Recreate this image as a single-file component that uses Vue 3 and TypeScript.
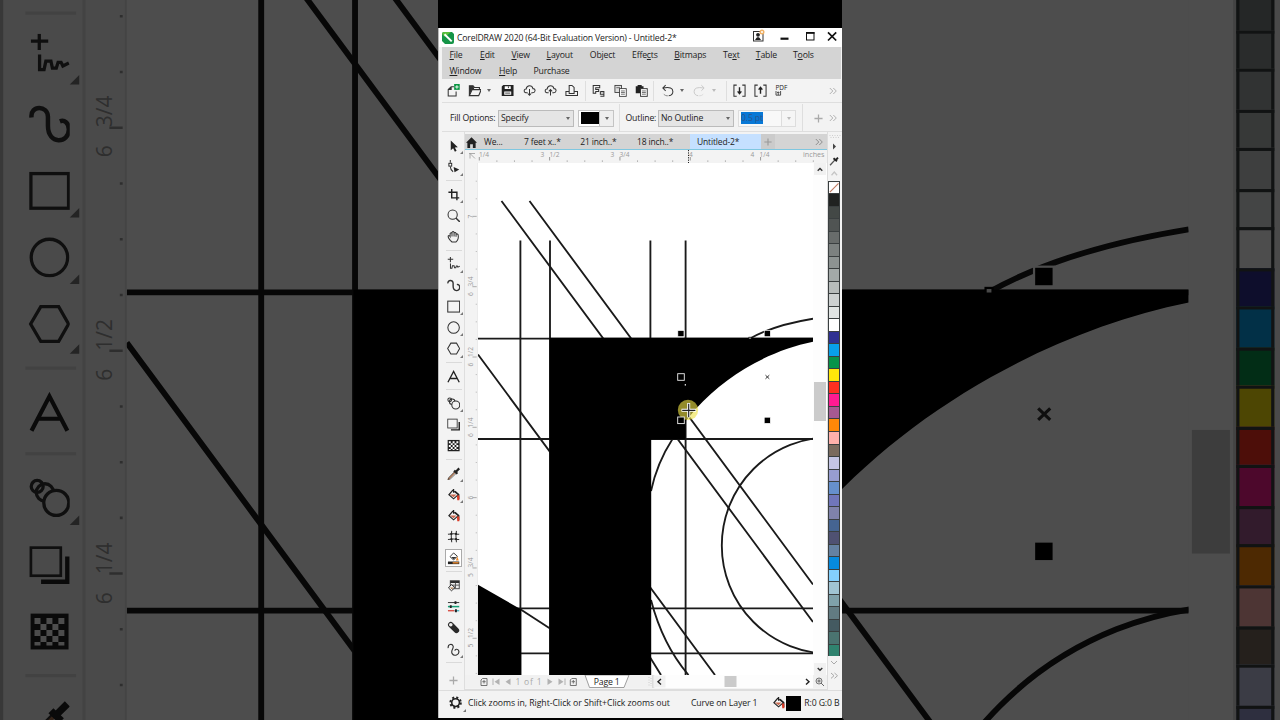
<script setup lang="ts">
interface Tool { icon: string; flyout?: boolean; active?: boolean; sep?: boolean }

const layers: string[] = ['backdrop', 'front']

const menuTop: [string, string, string, number][] = [
  ['', 'F', 'ile', 30.5], ['', 'E', 'dit', 31.5], ['', 'V', 'iew', 35], ['', 'L', 'ayout', 43.3], ['Object', '', '', 42.2],
  ['Effe', 'c', 'ts', 42.3], ['', 'B', 'itmaps', 48.7], ['Te', 'x', 't', 32.8], ['', 'T', 'able', 37.2], ['T', 'o', 'ols', 30],
]
const menuBottom: [string, string, string, number][] = [['', 'W', 'indow', 49.5], ['', 'H', 'elp', 34.5], ['Purchase', '', '', 50]]

const s = 'fill="none" stroke="#333" stroke-width="1.1"'
const icons: Record<string, string> = {
  pick: '<path d="M4 1.500v10.500l2.500-2.200 1.900 3.700 1.800-.9-1.900-3.500 3.200-.3z" fill="#222"/>',
  shape: `<path d="M3.500 0v3M3.500 7q.3 4 3 5.500" ${s}/><rect x="2" y="3.500" width="3" height="3" fill="#fff" stroke="#222"/><path d="M7 7.500l6 2.500-5 3z" fill="#222"/>`,
  crop: '<path d="M5 1v9.500h8M1.500 4.500h9v8.500" fill="none" stroke="#222" stroke-width="1.500"/>',
  zoom: `<circle cx="6" cy="6" r="4.900" ${s}/><path d="M9.400 9.500l4.200 4.200" stroke="#333" stroke-width="1.500"/>`,
  hand: `<path d="M3.500 11Q.8 8 1.300 6.300q1-1 2 .7V3.700q1.200-1.500 2 0V2.500q1.200-1.600 2.200 0v.7q1.200-1.200 2.100.3v1q1.400-1 2.200.5 1 5-2.200 7.700H5.200zM5.300 3.700V7M7.500 3v4M9.600 4v3.200" ${s}/>`,
  freehand: `<path d="M3.600 0v5.500M.8 2.500h5.800" ${s} stroke-width="1"/><path d="M3.700 7v5h1.500l.6-2.800h1.700l.5 2.300h1.300l.6-1.900h1l.6 1.200 2-1" ${s} stroke-width="1"/>`,
  curve: '<path d="M1 4.700C.5 .5 6.500 .5 6.500 4.500v3c0 6.500 7 6 7 1.200 0-2.200-1.500-3.300-3-2.700" fill="none" stroke="#333" stroke-width="1.500"/>',
  rect: `<rect x=".8" y="1.200" width="12.600" height="11.600" ${s} stroke-width=".9"/>`,
  ellipse: `<circle cx="7" cy="7" r="6.100" ${s} stroke-width=".9"/>`,
  polygon: `<path d="M4.100 1.200h6l3.300 5.800-3.300 5.800h-6L.7 7z" ${s} stroke-width=".9"/>`,
  text: '<path d="M1 13L7 1.500l6 11.500M3 9h8" fill="none" stroke="#222" stroke-width="1.400"/>',
  blend: `<g ${s} stroke-width=".9"><circle cx="2.900" cy="3" r="2"/><circle cx="5.500" cy="5" r="2.900"/><circle cx="9.300" cy="8.500" r="4.200" fill="#f3f3f3"/></g>`,
  shadow: `<path d="M4.200 12.600h8.800V4.200" fill="none" stroke="#222" stroke-width="1.500"/><rect x=".8" y="1.200" width="10" height="9.400" fill="#f6f6f6" stroke="#333" stroke-width=".9"/>`,
  checker: '<rect x=".7" y="1" width="12.700" height="12" fill="#222"/><g fill="#fff"><path d="M2 2.500h2v2H2zM6 2.500h2v2H6zM10 2.500h2v2h-2zM4 4.500h2v2H4zM8 4.500h2v2H8zM2 6.500h2v2H2zM6 6.500h2v2H6zM10 6.500h2v2h-2zM4 8.500h2v2H4zM8 8.500h2v2H8zM2 10.500h2v1.200H2zM6 10.500h2v1.200H6zM10 10.500h2v1.200h-2z"/></g>',
  dropper: '<path d="M1 13.500L9 5" stroke="#ad7450" stroke-width="1.500"/><path d="M1 13.500l1-2.500L8 5M1.500 13.500l2.300-1L10 6.500" fill="none" stroke="#333" stroke-width=".7"/><path d="M7.500 3.800l3.500 3.400M9.500 5l3.500-3.500" stroke="#222" stroke-width="2.400"/>',
  bucket: '<path d="M6 2.500l6 4.500-5 4.500-5-4.300z" fill="#f5f5f5" stroke="#222" stroke-width="1.200"/><path d="M3 7h7L7 9.800z" fill="#c96a50"/><path d="M7 1v4M8.500 3.500L12.500 7v5" fill="none" stroke="#222" stroke-width="1.300"/><path d="M10.500 8h2.600v5h-2.200z" fill="#dc3b25"/>',
  mesh: `<path d="M5 1q-1 5 0 12M10 1q-1 5 0 12M1 4.500q6-1 12 0M1 10q6-1 12 0" ${s} stroke-width=".8"/><g fill="#222"><circle cx="4.600" cy="4.200" r="1.200"/><circle cx="9.600" cy="4.200" r="1.200"/><circle cx="4.700" cy="9.800" r="1.200"/><circle cx="9.600" cy="9.800" r="1.200"/></g>`,
  objfill: '<path d="M7 1l4 3.500L7 8.500 3.200 5z" fill="#fff" stroke="#333"/><path d="M4.500 5.200h5.500L7 7.700z" fill="#333"/><path d="M10.800 4.500L12.500 9h-3z" fill="#e9892f"/><path d="M1 11.500h12" stroke="#222" stroke-width="2.800"/><path d="M6 11.500h6.400" stroke="#e9892f" stroke-width="1.500"/>',
  table: '<rect x="3.500" y="1.800" width="9.500" height="8.500" fill="#eee" stroke="#444"/><path d="M3.500 3.200H13" stroke="#222" stroke-width="2"/><path d="M9 4v6M5 6.500h8" stroke="#555"/><path d="M4.500 6l4 3-3.700 3.500-3.200-3z" fill="#fff" stroke="#222"/><path d="M3 9h4.500L5 11z" fill="#a47449"/>',
  sliders: '<path d="M1 2.700h12" stroke="#444" stroke-width="1.100"/><path d="M1 7h12" stroke="#16a176" stroke-width="1.600"/><path d="M1 11.400h7" stroke="#d43b31" stroke-width="1.300"/><path d="M8 11.400h5" stroke="#37a8bb" stroke-width="1.300"/><g fill="#222"><path d="M8 1.200h2v3H8zM3 5.500h2v3H3zM8.500 9.900h2v3h-2z"/></g>',
  pill: '<path d="M4 4l6 6" stroke="#2a2a2a" stroke-width="5.800" stroke-linecap="round"/><circle cx="4" cy="4" r="1.900" fill="#eee"/>',
  squiggle: '<path d="M1.300 5.500C.5 1 5.500 .5 6.500 3.300S3.500 8 5.500 11.300s8 1.200 7-2.800c-1-3-4.500-2-3.800-.3" fill="none" stroke="#333" stroke-width="1.200"/>',
  newdoc: `<path d="M7.500 3H4.500L1.300 6v7h8.500V8M1.300 6h3.200V3" ${s}/><path d="M7.700 0h6v6.300h-6z" fill="#079541"/><path d="M10.700 1.300v3.800M8.800 3.200h3.800" stroke="#fff" stroke-width="1"/>`,
  open: '<path d="M1.500 12.500V2h4l1.300 1.700h5.500V6M1.500 12.500L4.500 6h9.800L11.500 12.500z" fill="#f4f4f4" stroke="#333" stroke-width="1.200"/><path d="M1.500 12V2h3.800l1.200 2v2H4.300z" fill="#333"/>',
  save: '<path d="M2.500 1h11v12H.8V2.700z" fill="#222"/><path d="M4 2.500h6.500v3H4zM3.500 8h7.500v3.700H3.500z" fill="#fff"/><path d="M4.500 9.800h5.500M8 2.500v2" stroke="#333"/>',
  down: `<path d="M5 9.500H3Q.8 8.700 1.300 6.800 2 5.300 3.300 5.500 4 2 7 2t3.700 3q2.200-.2 2.300 2.300-.3 2.200-2.500 2.200H9M7 5.500v6.500M5.200 10.200L7 12.200l1.800-2" ${s}/>`,
  up: `<path d="M5 9.500H3Q.8 8.700 1.300 6.800 2 5.300 3.300 5.500 4 2 7 2t3.700 3q2.200-.2 2.300 2.300-.3 2.200-2.500 2.200H9M7 12.500V6M5.200 8L7 6l1.800 2" ${s}/>`,
  print: `<path d="M4.500 8V1.500h3l2.300 2.200V8M1 12.500h12.500V8h-3.700v2.200H4.500V8H1z" ${s}/>`,
  cut: `<path d="M1.300 10V1.500h7V4H4v2h3.200v2H4v2zM9 8.200h3.800v5H9M9 8.200v2.800h3.800" ${s} stroke-width=".9"/>`,
  copy: `<rect x="1" y="1.500" width="7" height="7.700" fill="#ddd" stroke="#333" stroke-width=".9"/><rect x="6" y="5" width="7.200" height="8.300" fill="#fff" stroke="#333" stroke-width=".9"/><path d="M2.500 4h4M7.500 7.500h4.200M7.500 9.200h4.200M7.500 11h4.200" stroke="#444" stroke-width=".8"/>`,
  paste: '<path d="M.8 2.500h2V1h4.400v1.500h2V10H.8z" fill="#222"/><rect x="6" y="5" width="7.200" height="8.300" fill="#fff" stroke="#333"/><path d="M7.500 7.500h4.200M7.500 9.200h4.200M7.500 11h4.200" stroke="#444" stroke-width=".8"/>',
  undo: `<path d="M5 1.300L2 4.300l3 3M2.500 4.300Q12.800 2.500 12.800 8q0 4-4.500 4.700" ${s}/><path d="M7 12.700q-2.500 0-4.300-2" fill="none" stroke="#333" stroke-dasharray="1.200 1"/>`,
  redo: '<g transform="translate(14 0) scale(-1 1)" fill="none" stroke="#c6c6c6"><path d="M5 1.300L2 4.300l3 3M2.500 4.300Q12.800 2.500 12.800 8q0 4-4.500 4.700"/><path d="M7 12.700q-2.500 0-4.300-2" stroke-dasharray="1.200 1"/></g>',
  import: `<path d="M4 1.200H1v12h3M10 1.200h3v12h-3" ${s}/><path d="M7 3.500v6.500M5 8l2 2.500L9 8" fill="none" stroke="#222" stroke-width="1.500"/>`,
  export: `<path d="M4 1.200H1v12h3M10 1.200h3v12h-3" ${s}/><path d="M7 10.500V4M5 6l2-2.500L9 6" fill="none" stroke="#222" stroke-width="1.500"/>`,
  gear: '<circle cx="7" cy="7" r="5.500" fill="none" stroke="#222" stroke-width="2.200" stroke-dasharray="2.160 2.160"/><circle cx="7" cy="7" r="4.100" fill="none" stroke="#222" stroke-width="1.700"/>',
}

const tools: Tool[] = [
  { icon: 'pick', flyout: true }, { icon: 'shape', flyout: true, sep: true },
  { icon: 'crop', flyout: true }, { icon: 'zoom' }, { icon: 'hand', sep: true },
  { icon: 'freehand', flyout: true }, { icon: 'curve' }, { icon: 'rect', flyout: true }, { icon: 'ellipse', flyout: true },
  { icon: 'polygon', flyout: true, sep: true }, { icon: 'text', sep: true },
  { icon: 'blend', flyout: true }, { icon: 'shadow' }, { icon: 'checker', sep: true },
  { icon: 'dropper', flyout: true }, { icon: 'bucket', flyout: true }, { icon: 'bucket' }, { icon: 'mesh' },
  { icon: 'objfill', active: true, sep: true }, { icon: 'table' }, { icon: 'sliders' }, { icon: 'pill' },
  { icon: 'squiggle', flyout: true, sep: true },
]

const barIcons: [string, number][] = [
  ['newdoc', 21.5], ['open', 19], ['caret', 14], ['save', 21.5], ['down', 21.2], ['up', 21.3], ['print', 20.5], ['sep', 6.5],
  ['cut', 21.8], ['copy', 20.8], ['paste', 18.4], ['sep', 8], ['undo', 19.3], ['caret', 12.5], ['redo', 19], ['caretOff', 14.7], ['sep', 6.5],
  ['import', 21], ['export', 21.5],
]

const tabs: [string, number][] = [['7 feet x..*', 56.3], ['21 inch..*', 56.7], ['18 inch..*', 56]]

const swatches: string[] = [
  '#202221', '#434846', '#505453', '#686c6b', '#7c8180', '#8d9392', '#a3a9a8', '#b7bcbb', '#cdd1d1', '#e1e5e4', '#ffffff',
  '#2f3192', '#08a0ea', '#07944a', '#ffe70a', '#ff3020', '#ff1b92', '#a65992', '#ff8808', '#ffb1ab', '#7a6b5e', '#c4c5e4',
  '#979dd0', '#6690cd', '#7076ba', '#7f82aa', '#456491', '#4f5172', '#6481a2', '#068ade', '#83d0fd', '#a0c4d3', '#7fa1aa',
  '#627b82', '#445a61', '#4a7370', '#30836f',
]

const hTicks = Array.from({ length: 20 }, (_, i) => ({ x: 479.3 + i * 17.58, major: i % 4 === 0 }))
const vTicks = Array.from({ length: 29 }, (_, i) => ({ y: 181.2 + i * 17.58, major: i % 4 === 2 }))
const hLabels: [number, string][] = [[479, '1/4'], [540.5, '3'], [549.5, '1/2'], [610.5, '3'], [619.5, '3/4'], [689, '4'], [750.5, '4'], [759.5, '1/4']]
const vLabels: [number, string][] = [[218.5, '7'], [296, '6'], [286.5, '3/4'], [366.5, '6'], [357, '1/2'], [437, '6'], [427.5, '1/4'], [499.5, '6'], [577, '5'], [567.5, '3/4'], [647.5, '5'], [638, '1/2']]
</script>

<template>
  <div class="stage">
    <div v-for="layer in layers" :key="layer" class="phone" :class="layer">
      <div class="window">
        <header class="title">
          <svg class="logo" viewBox="0 0 12 12"><path d="M0 2Q0 0 2 0h8l2 2v8q0 2-2 2H3L0 9z" fill="#159447" /><path d="M0 2Q0 0 2 0h7L3 5z" fill="#59bf3b" /><path d="M2.500 2.200L9.700 9.400" stroke="#fff" stroke-width="2" /></svg>
          <span class="title-text">CorelDRAW 2020 (64-Bit Evaluation Version) - Untitled-2*</span>
          <svg class="controls" viewBox="748 0 90 19">
            <rect x="753.500" y="3.500" width="9.500" height="9.500" fill="#fff" stroke="#333" />
            <circle cx="758" cy="6.800" r="1.900" fill="#222" /><path d="M755 12q3-6 6 0z" fill="#222" />
            <circle cx="762" cy="4" r="2.500" fill="#f0b268" /><circle cx="762" cy="4" r="1" fill="#fff" />
            <path d="M780.500 10.700h8" stroke="#111" stroke-width="2.200" />
            <rect x="806.500" y="4.500" width="7.500" height="7.500" fill="none" stroke="#111" /><path d="M806 5h8.500" stroke="#111" stroke-width="1.700" />
            <path d="M828 4.300l8.200 8.200M836.200 4.300l-8.200 8.200" stroke="#111" stroke-width="1.700" />
          </svg>
        </header>

        <nav class="menu">
          <div class="menu-row"><span v-for="(m, i) in menuTop" :key="i" :style="{ width: m[3] + 'px' }">{{ m[0] }}<u>{{ m[1] }}</u>{{ m[2] }}</span></div>
          <div class="menu-row"><span v-for="(m, i) in menuBottom" :key="i" :style="{ width: m[3] + 'px' }">{{ m[0] }}<u>{{ m[1] }}</u>{{ m[2] }}</span></div>
        </nav>

        <div class="toolbar">
          <span v-for="(b, i) in barIcons" :key="i" class="slot" :style="{ width: b[1] + 'px' }">
            <i v-if="b[0] === 'sep'" class="vsep"></i>
            <i v-else-if="b[0].startsWith('caret')" class="caret" :class="{ off: b[0] === 'caretOff' }"></i>
            <svg v-else class="ico" viewBox="0 0 14 14" v-html="icons[b[0]]"></svg>
          </span>
          <span class="pdf">PDF<svg viewBox="0 0 8 6"><path d="M1 0v5h5.500V0M3.700 5V1M2.200 2.500L3.700 1l1.500 1.500" fill="none" stroke="#333" /></svg></span>
          <svg class="more" viewBox="0 0 8 8"><path d="M.8 1l3 3-3 3M4.300 1l3 3-3 3" fill="none" stroke="#aaa" stroke-width=".9" /></svg>
        </div>

        <div class="props">
          <span class="lbl fill-lbl">Fill Options:</span>
          <span class="select">Specify<i class="caret"></i></span>
          <span class="color"><b></b><em><i class="caret"></i></em></span>
          <i class="vsep tall"></i>
          <span class="lbl out-lbl">Outline:</span>
          <span class="select">No Outline<i class="caret"></i></span>
          <span class="width"><b>0.5 pt</b><em><i class="caret off"></i></em></span>
          <i class="vsep tall second"></i>
          <svg class="plus" viewBox="0 0 10 10"><path d="M5 .5v9M.5 5h9" stroke="#aaa" stroke-width="1.400" /></svg>
          <svg class="more" viewBox="0 0 8 8"><path d="M.8 1l3 3-3 3M4.300 1l3 3-3 3" fill="none" stroke="#aaa" stroke-width=".9" /></svg>
        </div>

        <main class="main">
          <aside class="toolbox">
            <div v-for="(t, i) in tools" :key="i" class="tool" :class="{ sep: t.sep }">
              <div class="tool-box" :class="{ active: t.active }">
                <svg class="ico" viewBox="0 0 14 14" v-html="icons[t.icon]"></svg>
                <i v-if="t.flyout" class="flyout"></i>
              </div>
            </div>
            <svg class="plus add" viewBox="0 0 10 10"><path d="M5 .5v9M.5 5h9" stroke="#aaa" stroke-width="1.400" /></svg>
          </aside>

          <section class="doc">
            <div class="tabs">
              <span class="tab home"><svg viewBox="0 0 12 12"><path d="M6 .3L12 6.300H10.500V12H7.500V8H4.500v4h-3V6.300H0z" fill="#222" /></svg>We...</span>
              <span v-for="t in tabs" :key="t[0]" class="tab" :style="{ width: t[1] + 'px' }">{{ t[0] }}</span>
              <span class="tab current">Untitled-2*</span>
              <span class="tab new"><svg viewBox="0 0 10 10"><path d="M5 .5v9M.5 5h9" stroke="#999" stroke-width="1.400" /></svg></span>
              <svg class="more" viewBox="0 0 8 8"><path d="M.8 1l3 3-3 3M4.300 1l3 3-3 3" fill="none" stroke="#888" stroke-width=".9" /></svg>
            </div>
            <svg class="hruler" viewBox="465 150 362 13">
              <rect x="465" y="150" width="362" height="13" fill="#f3f3f3" />
              <path d="M469 153.500h6M470 153.500l5 5M470 153.500v5" stroke="#999" stroke-width=".8" fill="none" />
              <path v-for="t in hTicks" :key="t.x" :d="`M${t.x} ${t.major ? 157 : 160.500}V${t.major ? 160.500 : 161.700}`" stroke="#999" stroke-width="1" />
              <text v-for="l in hLabels" :key="l[0]" :x="l[0]" y="156.500" class="rule-text">{{ l[1] }}</text>
              <path d="M688.500 150v13" stroke="#222" stroke-dasharray="1.200 1.200" />
              <text x="803" y="156.500" class="rule-text inches" textLength="21.500">inches</text>
            </svg>
            <div class="work">
              <svg class="vruler" viewBox="465 163 13 512">
                <rect x="465" y="163" width="13" height="512" fill="#f3f3f3" /><path d="M477.700 163v512" stroke="#e2e2e2" stroke-width=".6" />
                <path v-for="t in vTicks" :key="t.y" :d="`M${t.major ? 472.500 : 475.800} ${t.y}H476.700`" stroke="#999" stroke-width=".8" />
                <text v-for="l in vLabels" :key="l[0]" :transform="`translate(473.300 ${l[0]}) rotate(-90)`" class="rule-text">{{ l[1] }}</text>
              </svg>
              <svg class="canvas" viewBox="478 163 335 512">
                <rect x="478" y="163" width="335" height="512" fill="#fff" />
                <g fill="none" stroke="#1a1a1a" stroke-width="1.850">
                  <path d="M501.500 201L813 622M529.500 201L813 584.500M478 354.500L715 675M648 654L661 675" />
                  <path d="M520.400 240.500V675M550 240.500V675M650.400 240.500V440M685.600 240.500V675" />
                  <path d="M478 338.600H813M478 439H813M478 608.300H813M478 653.300H813" />
                  <path d="M750 338.500Q774 325 813 318.700" />
                  <path d="M672.500 439Q657 463 651 491M651 600Q662.500 644.500 688.500 675" />
                  <circle cx="830" cy="545.500" r="108.200" />
                  <path d="M520 609L550 628.500" />
                </g>
                <path d="M549.500 337.800H813V341.800C770 350.500 726 375 696 408.700L685.600 421V439.500H651.200V675H549.500ZM478 584.700L521.200 609.500V675H478Z" fill="#000" />
                <circle cx="688" cy="410" r="10.200" fill="#eee044" fill-opacity=".62" />
                <g fill="#000" stroke="#fff" stroke-width=".7">
                  <rect x="677.800" y="330.500" width="6.200" height="6.200" /><rect x="764.200" y="330.500" width="6.200" height="6.200" /><rect x="764.200" y="417.200" width="6.200" height="6.200" />
                </g>
                <g fill="#000" stroke="#eee" stroke-width=".9"><rect x="677.700" y="373.700" width="6.600" height="6.600" /><rect x="677.700" y="417" width="6.600" height="6.600" /></g>
                <rect x="748.900" y="337.200" width="2.200" height="1.800" fill="#eee" stroke="#000" stroke-width=".7" />
                <path d="M765.500 375.200l3.800 3.600M769.300 375.200l-3.800 3.600" stroke="#333" stroke-width="1" />
                <rect x="684.700" y="384.200" width="1.300" height="1.300" fill="#fff" />
                <path d="M688.700 403v14.500M681.500 410.300H696" stroke="#fff" stroke-width="3" /><path d="M688.700 403.700v13.200M682.200 410.300h13.200" stroke="#222" stroke-width="1.200" />
              </svg>
              <div class="vscroll">
                <svg viewBox="0 0 12 12"><path d="M3.700 7.800L6 5.500l2.300 2.300" fill="none" stroke="#333" stroke-width="1.400" /></svg>
                <i></i>
                <svg viewBox="0 0 12 12"><path d="M3.700 5L6 7.300 8.300 5" fill="none" stroke="#333" stroke-width="1.400" /></svg>
              </div>
            </div>
            <div class="pagebar">
              <svg class="pages" viewBox="465 675 362 13">
                <rect x="465" y="675" width="190" height="13" fill="#f1f1f1" />
                <g fill="none" stroke="#666" stroke-width=".9"><path d="M482.500 678.500h4.500v7h-6v-5.500zM484 680v3.500M482.300 681.700h3.400M571.800 678.500h4.500v7h-6v-5.500zM573.300 680v3.500M571.600 681.700h3.400" /></g>
                <g fill="#b2b2b2"><path d="M492.500 678.500h1v6.500h-1zM499.500 678.500v6.500l-5-3.200zM510.500 678.500v6.500l-5-3.200zM547.500 678.500v6.500l5-3.200zM558.500 678.500v6.500l5-3.200zM564.500 678.500h1v6.500h-1z" /></g>
                <text x="515.500" y="685.200" class="count" textLength="26">1 of 1</text>
                <path d="M585 675l4.500 12.500h34.500l5-12.500z" fill="#fff" stroke="#888" stroke-width=".8" />
                <text x="593.700" y="684.700" class="page" textLength="26">Page 1</text>
                <path d="M653 675v13" stroke="#bbb" stroke-width=".8" /><path d="M649 677v10M651 678v8" stroke="#ccc" stroke-dasharray="1 1.500" />
                <rect x="655" y="675" width="172" height="13" fill="#fdfdfd" /><rect x="653.500" y="675.500" width="12" height="12" fill="#f1f1f1" />
                <path d="M661 679l-3 2.700 3 2.700M806 679l3 2.700-3 2.700" fill="none" stroke="#222" stroke-width="1.400" />
                <rect x="724.500" y="676" width="12" height="11" fill="#cbcbcb" /><rect x="813" y="675" width="14" height="13" fill="#f1f1f1" />
                <circle cx="819" cy="681" r="3" fill="#ddd" stroke="#777" /><path d="M821 683l3 3M817.500 681h3M819 679.500v3" stroke="#666" />
              </svg>
            </div>
          </section>

          <aside class="palette">
            <svg class="pal-top" viewBox="827.500 132 14 49">
              <path d="M829 135.500h11M830 137.500h10" stroke="#ccc" stroke-dasharray="1 1.500" />
              <path d="M832.500 143.500v6l3-3z" fill="#444" />
              <path d="M829.500 165.500l5-5.500" stroke="#555" stroke-width="1.300" /><path d="M833 158.500l3.500 3M834.800 160.700l2.700-3" stroke="#222" stroke-width="1.900" />
              <path d="M831 175.500l2.800-3.200 2.800 3.200" fill="none" stroke="#c6c6c6" stroke-width="1.300" />
            </svg>
            <svg class="none" viewBox="0 0 12 12"><rect width="12" height="12" fill="#fff" /><path d="M1 11L11 1" stroke="#c07a62" stroke-width="1.300" /></svg>
            <i v-for="c in swatches" :key="c" class="sw" :style="{ background: c }"></i>
            <svg class="pal-end" viewBox="827.500 657 14 33"><path d="M830.500 662l3 3 3-3M830.500 674l3 2.700-3 2.700M834 674l3 2.700-3 2.700" fill="none" stroke="#aaa" stroke-width="1" /></svg>
          </aside>
        </main>

        <footer class="status">
          <span class="gear"><svg class="ico" viewBox="0 0 14 14" v-html="icons.gear"></svg><i class="flyout"></i></span>
          <span class="hint">Click zooms in, Right-Click or Shift+Click zooms out</span>
          <span class="object">Curve on Layer 1</span>
          <svg class="ico" viewBox="0 0 14 14" v-html="icons.bucket"></svg>
          <b></b>
          <span class="rgb">R:0 G:0 B</span>
        </footer>
      </div>
    </div>
  </div>
</template>

<style>
html, body { margin: 0; background: #000; overflow: hidden; }
</style>

<style scoped>
* { box-sizing: border-box; }
i, em { font-style: normal; }
svg { display: block; flex: none; }
.stage { position: relative; width: 1280px; height: 720px; overflow: hidden; background: #000; }
.phone { width: 404px; height: 720px; padding: 28px 0 2px; background: #000; font: 9px/1 "Open Sans", "Noto Sans", sans-serif; color: #222; white-space: nowrap; overflow: hidden; }
.front { position: relative; margin: 0 auto; }
.backdrop { position: absolute; left: 0; top: -781px; transform-origin: 0 0; transform: scale(3.17); opacity: .3; }
.window { height: 690px; display: flex; flex-direction: column; background: #f3f3f3; border-left: 1px solid #bbb; }
.title { height: 19px; flex: none; display: flex; align-items: center; background: #fff; padding-left: 3px; }
.logo { width: 12px; height: 12px; margin-right: 3px; }
.title-text { width: 291px; font-size: 8.7px; letter-spacing: -.17px; padding-top: 1px; }
.controls { width: 90px; height: 19px; }
.menu { height: 32px; flex: none; margin: 0 1px 0 3px; background: #d4d4d4; font-size: 8.7px; letter-spacing: -.17px; }
.menu-row { display: flex; height: 16px; align-items: center; padding-left: 7.5px; }
.menu-row span { flex: none; }
u { text-decoration-thickness: .7px; text-underline-offset: 1px; }
.toolbar { height: 24px; flex: none; display: flex; align-items: center; padding-left: 4.5px; border-bottom: 1px solid #dedede; margin-left: 3px; }
.slot { flex: none; display: flex; align-items: center; }
.ico { width: 13.2px; height: 13.2px; }
.toolbar .ico { width: 13px; height: 13px; }
.caret { display: block; width: 0; height: 0; border: 2.7px solid transparent; border-top: 3px solid #666; border-bottom: 0; }
.caret.off { border-top-color: #bbb; }
.vsep { width: 1px; height: 20px; background: #dedede; }
.vsep.tall { height: 28px; margin-left: 5px; }
.pdf { font: 6.5px/6px "Open Sans", sans-serif; width: 18px; }
.pdf svg { width: 7px; height: 5px; }
.more { width: 8px; height: 8px; margin-left: auto; margin-right: 5.5px; }
.props { height: 29px; flex: none; display: flex; align-items: center; padding: 2px 0 0 8px; border-bottom: 1px solid #dedede; margin-left: 3px; font-size: 8.7px; letter-spacing: -.17px; }
.lbl { flex: none; }
.fill-lbl { width: 48px; }
.select { display: flex; align-items: center; justify-content: space-between; flex: none; width: 76px; height: 17px; padding: 0 3px 0 2px; border: 1px solid #bbb; background: #e5e5e5; }
.color, .width { display: flex; flex: none; align-items: center; height: 17px; border: 1px solid #c4c4c4; background: #fff; }
.color { width: 36px; margin-left: 4px; }
.color b { width: 18px; height: 12px; background: #000; margin-left: 2px; flex: none; }
.color em, .width em { margin-left: auto; width: 14px; height: 100%; display: flex; align-items: center; justify-content: center; background: #eee; border-left: 1px solid #c4c4c4; }
.out-lbl { margin-left: 5.5px; width: 32.5px; }
.width { width: 58px; margin-left: 4px; border-color: #ddd; background: #f8f8f8; }
.width b { width: 22px; height: 12px; margin-left: 2px; background: #0878d6; color: #2a5590; font-weight: 400; line-height: 12px; overflow: hidden; }
.width em { background: #f5f5f5; border-color: #ddd; }
.vsep.tall.second { margin-left: 6px; }
.plus { width: 9px; height: 9px; }
.props .plus { margin-left: 11px; }
.main { height: 558px; flex: none; display: flex; }
.toolbox { width: 26px; flex: none; padding: 3.3px 0 0 4.5px; border-right: 1px solid #dedede; display: flex; flex-direction: column; align-items: center; }
.tool { width: 20px; height: 21.25px; flex: none; display: flex; justify-content: center; }
.tool.sep { height: 24.25px; padding-bottom: 2px; margin-bottom: 3px; width: 16px; border-bottom: .8px solid #dadada; }
.tool-box { flex: none; position: relative; width: 18px; height: 21px; display: flex; align-items: center; justify-content: center; }
.tool-box.active { width: 17px; height: 18px; margin-top: 1.5px; border: 1px solid #aaa; background: #fff; }
.flyout { position: absolute; right: 0; bottom: 2px; border-left: 3.3px solid transparent; border-bottom: 3px solid #777; }
.toolbox .add { margin-top: 9.5px; }
.doc { width: 362px; flex: none; }
.tabs { height: 18px; display: flex; align-items: stretch; padding-top: 1.5px; background: #d4d4d4; border-bottom: 1.5px solid #7fc7e0; font-size: 8.5px; letter-spacing: -.15px; border-top: 2px solid #f3f3f3; }
.tab { flex: none; display: flex; align-items: center; }
.tab.home { width: 59px; padding-left: 1px; gap: 7px; }
.tab.home svg { width: 11px; height: 11px; }
.tab.current { width: 71px; margin-top: -1.5px; margin-left: -3px; padding: 1.5px 0 0 7px; background: #c5e0ff; }
.tab.new { width: 14px; justify-content: center; background: #cbcbcb; margin-top: -1.5px; }
.tab.new svg { width: 8px; height: 8px; }
.tabs .more { margin-right: 4px; align-self: center; }
.hruler { width: 362px; height: 13px; }
.work { height: 512px; display: flex; }
.vruler { width: 13px; height: 512px; }
.canvas { width: 335px; height: 512px; }
.vscroll { width: 14px; height: 512px; background: #fdfdfd; display: flex; flex-direction: column; justify-content: space-between; align-items: center; }
.vscroll svg { width: 12px; height: 12px; background: #f1f1f1; }
.vscroll i { width: 12px; height: 39px; background: #cbcbcb; margin-top: -36px; }
.rule-text { font: 6.6px "Open Sans", sans-serif; fill: #999; }
.inches { font-size: 7.2px; }
.pages { width: 362px; height: 13px; }
.pagebar { height: 15px; border-bottom: 1px solid #ddd; }
.count { font: 8.5px "Open Sans", sans-serif; fill: #aaa; }
.page { font: 8.7px "Open Sans", sans-serif; fill: #222; }
.palette { width: 15px; flex: none; border-left: .5px solid #ddd; display: flex; flex-direction: column; align-items: flex-start; }
.pal-top { width: 14px; height: 48.7px; }
.none, .sw { width: 12.4px; height: 12.53px; flex: none; border: .5px solid #3a3f40; border-bottom-width: 0; }
.pal-end { width: 14px; height: 33px; }
.status { height: 28px; flex: none; display: flex; align-items: center; padding: 0 0 3px 10px; font-size: 8.7px; letter-spacing: -.1px; border-top: 1px solid #ddd; }
.gear { position: relative; width: 19px; }
.gear .flyout { right: 2px; bottom: -2px; }
.hint { width: 223px; letter-spacing: -.04px; }
.object { width: 81px; }
.status b { width: 15px; height: 15px; background: #000; margin: 0 3px 0 1px; flex: none; }
</style>
